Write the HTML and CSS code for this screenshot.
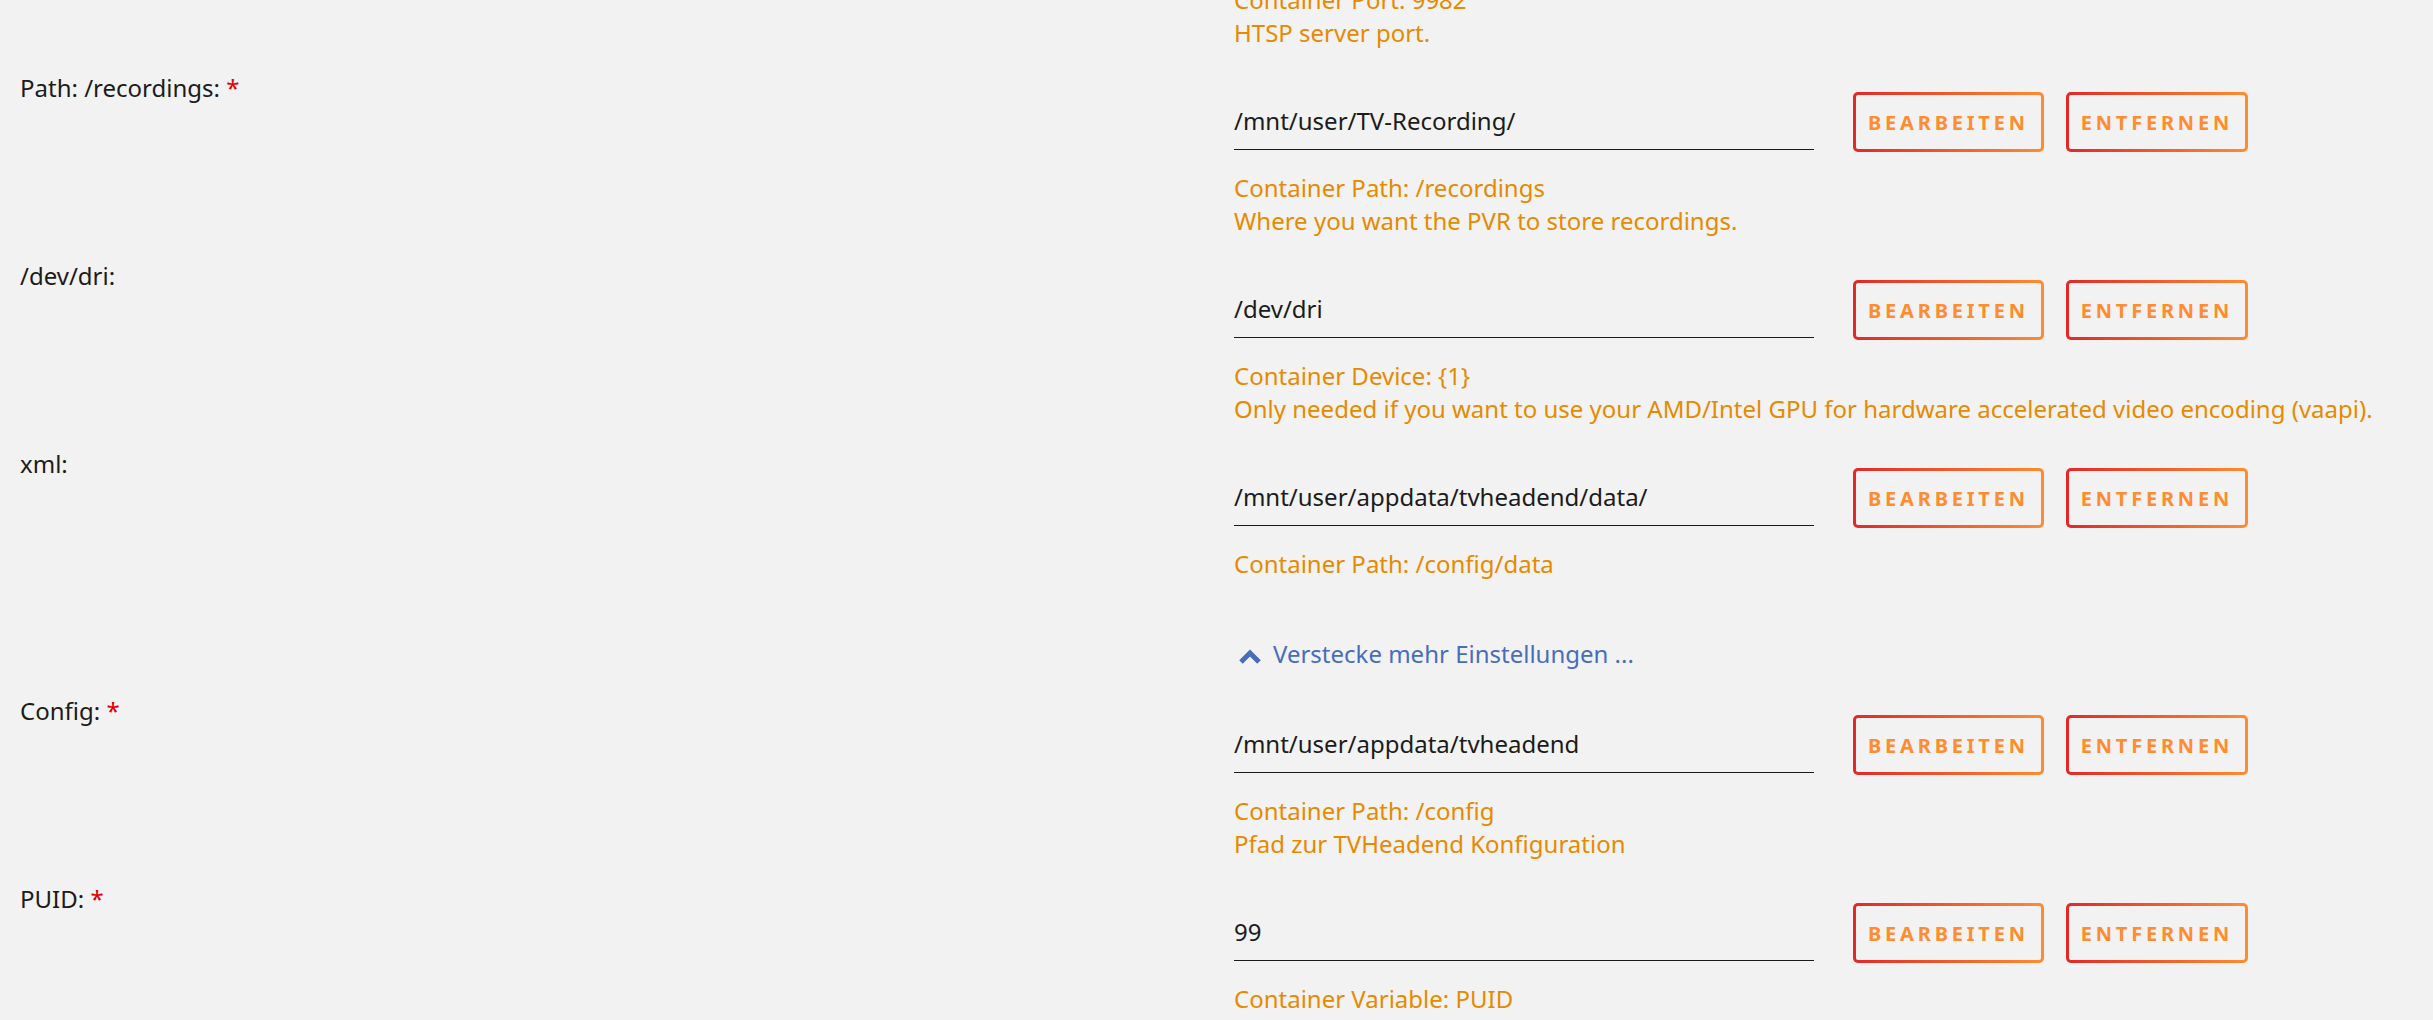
FILE: index.html
```html
<!DOCTYPE html>
<html lang="de">
<head>
    <meta charset="UTF-8">
    <meta name="viewport" content="width=device-width, initial-scale=1.0">
    <title>Update Container: tvheadend</title>
    <link rel="stylesheet" href="styles.css">
</head>
<body>
    <div class="main-body">
        <div class="list-body">
            <div class="row">
                <div class="label">HTSP Port: <span class="req">*</span></div>
                <div class="content">
                    <div class="field">
                        <input class="value" type="text" value="9982">
                        <div class="actions">
                            <button class="btn">Bearbeiten</button>
                            <button class="btn">Entfernen</button>
                        </div>
                    </div>
                    <div class="desc">Container Port: 9982<br>HTSP server port.</div>
                </div>
            </div>
            <div class="row">
                <div class="label">Path: /recordings: <span class="req">*</span></div>
                <div class="content">
                    <div class="field">
                        <input class="value" type="text" value="/mnt/user/TV-Recording/">
                        <div class="actions">
                            <button class="btn">Bearbeiten</button>
                            <button class="btn">Entfernen</button>
                        </div>
                    </div>
                    <div class="desc">Container Path: /recordings<br>Where you want the PVR to store recordings.</div>
                </div>
            </div>
            <div class="row">
                <div class="label">/dev/dri:</div>
                <div class="content">
                    <div class="field">
                        <input class="value" type="text" value="/dev/dri">
                        <div class="actions">
                            <button class="btn">Bearbeiten</button>
                            <button class="btn">Entfernen</button>
                        </div>
                    </div>
                    <div class="desc">Container Device: {1}<br>Only needed if you want to use your AMD/Intel GPU for hardware accelerated video encoding (vaapi).</div>
                </div>
            </div>
            <div class="row">
                <div class="label">xml:</div>
                <div class="content">
                    <div class="field">
                        <input class="value" type="text" value="/mnt/user/appdata/tvheadend/data/">
                        <div class="actions">
                            <button class="btn">Bearbeiten</button>
                            <button class="btn">Entfernen</button>
                        </div>
                    </div>
                    <div class="desc">Container Path: /config/data</div>
                </div>
            </div>
            <div class="row more-row">
                <div class="label"></div>
                <div class="more" onclick="toggleMore()">
                    <svg class="chevron" width="24" height="16" viewBox="0 0 24 16"><polyline points="3,14 12,5 21,14" fill="none" stroke="#486dba" stroke-width="5"/></svg>Verstecke mehr Einstellungen ...
                </div>
            </div>
            <div class="row">
                <div class="label">Config: <span class="req">*</span></div>
                <div class="content">
                    <div class="field">
                        <input class="value" type="text" value="/mnt/user/appdata/tvheadend">
                        <div class="actions">
                            <button class="btn">Bearbeiten</button>
                            <button class="btn">Entfernen</button>
                        </div>
                    </div>
                    <div class="desc">Container Path: /config<br>Pfad zur TVHeadend Konfiguration</div>
                </div>
            </div>
            <div class="row">
                <div class="label">PUID: <span class="req">*</span></div>
                <div class="content">
                    <div class="field">
                        <input class="value" type="text" value="99">
                        <div class="actions">
                            <button class="btn">Bearbeiten</button>
                            <button class="btn">Entfernen</button>
                        </div>
                    </div>
                    <div class="desc">Container Variable: PUID</div>
                </div>
            </div>
        </div>
    </div>
    <script>
        function toggleMore() {
            // nothing to hide in this static copy
        }
    </script>
</body>
</html>
```

FILE: styles.css
```css
html {
    overflow: hidden;
}
body {
    padding: 0;
    margin: 0;
    background-color: #f2f2f2;
    font-family: "Noto Sans", "Open Sans", sans-serif;
    font-size: 24px;
    line-height: 33px;
    color: #1c1b1b;
}
.main-body {
    width: 100%;
    padding-left: 20px;
    box-sizing: border-box;
}
.list-body {
    margin-top: -117px;
}
.row {
    display: grid;
    grid-template-columns: 1214px 1fr;
    margin-bottom: 22px;
}
.label {
    white-space: nowrap;
}
.req {
    color: #e00000;
}
.content {
    padding-top: 21px;
}
.field {
    display: flex;
    align-items: flex-start;
    height: 60px;
    gap: 39px;
}
.value {
    width: 580px;
    height: 58px;
    box-sizing: border-box;
    padding: 0;
    border: none;
    border-bottom: 1px solid #1c1b1b;
    background: transparent;
    font-family: inherit;
    font-size: 24px;
    color: #1c1b1b;
    outline: none;
}
.actions {
    display: flex;
    gap: 22px;
}
.btn {
    height: 60px;
    padding: 0 12px;
    border: 3px solid transparent;
    border-radius: 5px;
    background: linear-gradient(#f2f2f2, #f2f2f2) padding-box,
                linear-gradient(90deg, #e22828, #ff8c2f) border-box;
    color: #ff8c2f;
    font-family: inherit;
    font-size: 20px;
    font-weight: bold;
    letter-spacing: 3.8px;
    text-transform: uppercase;
    cursor: pointer;
}
.desc {
    margin-top: 19px;
    color: #e68a00;
}
.more-row {
    margin-top: 57px;
    margin-bottom: 24px;
}
.more {
    color: #486dba;
    cursor: pointer;
}
.chevron {
    margin-left: 4px;
    margin-right: 11px;
    vertical-align: -1px;
}
```
